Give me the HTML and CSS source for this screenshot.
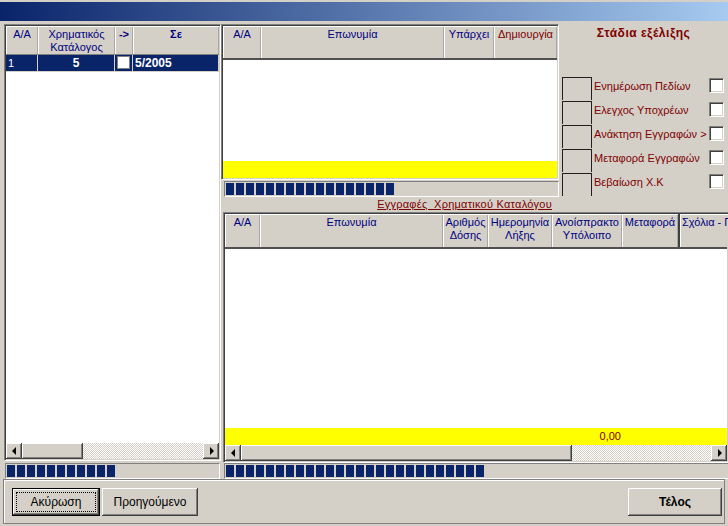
FILE: index.html
```html
<!DOCTYPE html>
<html>
<head>
<meta charset="utf-8">
<link rel="stylesheet" href="styles.css">
</head>
<body>
<div class="titlebar"></div>
<div class="main">
  <div class="leftcol">
    <div class="grid lgrid">
      <div class="ghead lhead">
        <div class="hc">Α/Α</div>
        <div class="hc">Χρηματικός<br>Κατάλογος</div>
        <div class="hc b">-&gt;</div>
        <div class="hc b">Σε</div>
      </div>
      <div class="lrow">
        <div class="c">1</div>
        <div class="c b ctr">5</div>
        <div class="c"><span class="rchk"></span></div>
        <div class="c b">5/2005</div>
      </div>
      <div class="gbody"></div>
      <div class="hscroll">
        <div class="sbtn"><span class="tri-l"></span></div>
        <div class="thumb" style="width:61px"></div>
        <div class="track"></div>
        <div class="sbtn"><span class="tri-r"></span></div>
      </div>
    </div>
    <div class="prog lprog"><div class="bar" style="width:108px"></div></div>
  </div>

  <div class="rightcol">
    <div class="topsec">
      <div class="midcol">
        <div class="grid mgrid">
          <div class="ghead mhead">
            <div class="hc">Α/Α</div>
            <div class="hc">Επωνυμία</div>
            <div class="hc">Υπάρχει</div>
            <div class="hc red">Δημιουργία</div>
          </div>
          <div class="gbody"></div>
          <div class="yrow"></div>
        </div>
        <div class="prog rprog"><div class="bar" style="width:168px"></div></div>
      </div>
      <div class="stages">
        <div class="stitle">Στάδια εξέλιξης</div>
        <div class="srow"><span class="sbox"></span><span class="slabel">Ενημέρωση Πεδίων</span><span class="cb"></span></div>
        <div class="srow"><span class="sbox"></span><span class="slabel">Ελεγχος Υποχρέων</span><span class="cb"></span></div>
        <div class="srow"><span class="sbox"></span><span class="slabel">Ανάκτηση Εγγραφών &gt;</span><span class="cb"></span></div>
        <div class="srow"><span class="sbox"></span><span class="slabel">Μεταφορά Εγγραφών</span><span class="cb"></span></div>
        <div class="srow"><span class="sbox"></span><span class="slabel">Βεβαίωση Χ.Κ</span><span class="cb"></span></div>
      </div>
    </div>
    <div class="caption"><span>Εγγραφές  Χρηματικού Καταλόγου</span></div>
    <div class="grid bgrid">
      <div class="ghead bhead">
        <div class="hc">Α/Α</div>
        <div class="hc">Επωνυμία</div>
        <div class="hc">Αριθμός<br>Δόσης</div>
        <div class="hc">Ημερομηνία<br>Λήξης</div>
        <div class="hc">Ανοίσπρακτο<br>Υπόλοιπο</div>
        <div class="hc sep">Μεταφορά</div>
        <div class="hc left">Σχόλια - Παρατηρήσεις</div>
      </div>
      <div class="gbody"></div>
      <div class="yrow bsum">
        <div></div><div></div><div></div><div></div>
        <div class="sum">0,00</div>
        <div></div><div></div>
      </div>
      <div class="hscroll">
        <div class="sbtn"><span class="tri-l"></span></div>
        <div class="thumb" style="width:331px"></div>
        <div class="track"></div>
        <div class="sbtn"><span class="tri-r"></span></div>
      </div>
    </div>
    <div class="prog rprog bprog"><div class="bar" style="width:258px"></div></div>
  </div>
</div>
<div class="footer">
  <div class="btn def"><span class="focus">Ακύρωση</span></div>
  <div class="btn prev">Προηγούμενο</div>
  <div class="btn end">Τέλος</div>
</div>
</body>
</html>
```

FILE: styles.css
```css
* { box-sizing: border-box; }
html, body { margin: 0; padding: 0; }
body {
  width: 728px;
  height: 526px;
  overflow: hidden;
  background: #d4d0c8;
  font-family: "Liberation Sans", Arial, sans-serif;
  font-size: 11px;
  color: #000;
}
.titlebar {
  height: 19px;
  margin-top: 2px;
  background: linear-gradient(90deg, #0a246a, #a6caf0);
}
.main {
  display: flex;
  height: 455px;
  margin-top: 3px;
  padding-left: 4px;
}
.leftcol {
  width: 217px;
  flex: none;
  display: flex;
  flex-direction: column;
}
.rightcol {
  width: 508px;
  flex: none;
  display: flex;
  flex-direction: column;
}

/* sunken grid frame */
.grid {
  border: 1px solid;
  border-color: #808080 #fff #fff #808080;
  box-shadow: inset 1px 1px #404040, inset -1px -1px #d4d0c8;
  padding: 1px;
  background: #fff;
  display: flex;
  flex-direction: column;
  overflow: hidden;
  flex: none;
}
.gbody { flex: 1; background: #fff; }

.ghead {
  display: grid;
  background: #d4d0c8;
  flex: none;
}
.hc {
  box-shadow: inset 1px 1px #fff, inset -1px 0 #a8a8a8;
  color: #000080;
  text-align: center;
  padding-top: 2px;
  line-height: 13px;
  white-space: nowrap;
  overflow: hidden;
}
.hc.b { font-weight: bold; }
.hc.red { color: #800000; }
.hc.left { text-align: left; padding-left: 2px; }
.hc.sep { border-right: 2px solid #404040; }

/* left grid */
.lgrid { height: 437px; }
.lhead {
  grid-template-columns: 32px 77px 18px 86px;
  height: 29px;
  border-bottom: 1px solid #808080;
}
.lrow {
  display: grid;
  grid-template-columns: 32px 77px 18px 86px;
  height: 17px;
  background: #0a246a;
  color: #fff;
  border-bottom: 1px solid #d4d0c8;
  flex: none;
}
.lrow .c {
  line-height: 16px;
  padding-left: 2px;
  border-right: 1px solid #d4d0c8;
  white-space: nowrap;
}
.lrow .c.b { font-weight: bold; font-size: 12px; }
.lrow .c.ctr { text-align: center; padding-left: 0; }
.rchk {
  display: block;
  width: 13px;
  height: 13px;
  margin-top: 1px;
  background: #fff;
  border: 1px solid #808080;
}

/* scrollbars */
.hscroll {
  display: flex;
  height: 16px;
  flex: none;
  background: #d4d0c8;
}
.sbtn, .thumb {
  height: 16px;
  background: #d4d0c8;
  box-shadow: inset -1px -1px #404040, inset 1px 1px #fff, inset -2px -2px #808080, inset 2px 2px #d4d0c8;
  flex: none;
}
.sbtn {
  width: 16px;
  display: flex;
  align-items: center;
  justify-content: center;
}
.track {
  flex: 1;
  background: repeating-conic-gradient(#d4d0c8 0 25%, #fff 0 50%) 0 0 / 2px 2px;
}
.tri-l, .tri-r {
  width: 0;
  height: 0;
  border-top: 4px solid transparent;
  border-bottom: 4px solid transparent;
}
.tri-l { border-right: 4px solid #000; margin-left: -1px; }
.tri-r { border-left: 4px solid #000; margin-left: 1px; }

/* progress */
.prog {
  height: 16px;
  border: 1px solid;
  border-color: #808080 #fff #fff #808080;
  padding: 1px;
  flex: none;
}
.bar {
  height: 12px;
  background: repeating-linear-gradient(90deg, #0a246a 0 8px, transparent 8px 10px);
}
.lprog { margin-top: 2px; margin-left: 1px; width: 215px; }
.rprog { margin-left: 3px; }

/* top section */
.topsec {
  display: flex;
  height: 173px;
  flex: none;
}
.midcol {
  width: 338px;
  flex: none;
  display: flex;
  flex-direction: column;
}
.mgrid { height: 156px; }
.mhead {
  grid-template-columns: 38px 183px 50px 63px;
  height: 34px;
  border-bottom: 2px solid #505050;
}
.yrow {
  height: 17px;
  background: #ffff00;
  flex: none;
}
.midcol .prog { margin-top: 1px; }

/* stage panel */
.stages {
  flex: 1;
  padding-left: 3px;
}
.stitle {
  height: 53px;
  padding-top: 2px;
  line-height: 14px;
  text-align: center;
  font-weight: bold;
  font-size: 12px;
  letter-spacing: 0.5px;
  color: #800000;
  padding-right: 4px;
}
.srow {
  display: flex;
  height: 24px;
  align-items: flex-start;
}
.sbox {
  width: 30px;
  height: 23px;
  flex: none;
  border: 1px solid #202020;
  border-bottom: none;
}
.slabel {
  flex: 1;
  color: #800000;
  padding-left: 2px;
  padding-top: 2px;
  line-height: 14px;
  white-space: nowrap;
  overflow: visible;
  width: 0;
}
.cb {
  width: 15px;
  height: 15px;
  flex: none;
  margin-top: 1px;
  margin-right: 5px;
  background: #fff;
  border: 1px solid;
  border-color: #808080 #fff #fff #808080;
  box-shadow: inset 1px 1px #404040, inset -1px -1px #d4d0c8;
}

/* caption */
.caption {
  height: 15px;
  width: 331px;
  flex: none;
  text-align: right;
  line-height: 15px;
  color: #800000;
  white-space: pre;
  letter-spacing: 0.25px;
}
.caption span { text-decoration: underline; }

/* bottom grid */
.bgrid {
  height: 251px;
  width: 506px;
  margin-left: 2px;
}
.bhead, .bsum {
  grid-template-columns: 35px 183px 45px 64px 70px 58px 140px;
}
.bhead {
  height: 35px;
  border-bottom: 2px solid #505050;
}
.bsum { display: grid; }
.sum {
  color: #800000;
  text-align: right;
  line-height: 17px;
  padding-right: 1px;
}
.bprog { margin-top: 0; }

/* footer */
.footer {
  width: 722px;
  height: 45px;
  margin-left: 3px;
  border: 1px solid #808080;
  box-shadow: inset 1px 1px #fff;
  padding: 8px 2px 0 8px;
  display: flex;
  gap: 2px;
}
.btn {
  height: 28px;
  background: #d4d0c8;
  display: flex;
  align-items: center;
  justify-content: center;
  font-size: 12px;
  box-shadow: inset -1px -1px #404040, inset 1px 1px #fff, inset -2px -2px #808080, inset 2px 2px #d4d0c8;
  flex: none;
}
.btn.def {
  width: 88px;
  box-shadow: inset 0 0 0 1px #000, inset -2px -2px #404040, inset 2px 2px #fff, inset -3px -3px #808080;
  padding: 4px;
}
.btn.def .focus {
  flex: 1;
  align-self: stretch;
  display: flex;
  align-items: center;
  justify-content: center;
  border: 1px dotted #000;
}
.btn.prev { width: 96px; }
.btn.end { width: 94px; margin-left: auto; font-weight: bold; }
```
